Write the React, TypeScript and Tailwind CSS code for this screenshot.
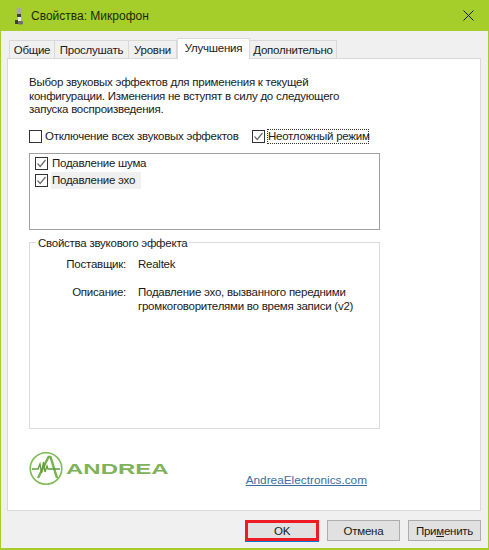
import { ReactNode } from 'react'

const tabs = [
  { label: 'Общие', width: 'w-[46px]' },
  { label: 'Прослушать', width: 'w-[74px]' },
  { label: 'Уровни', width: 'w-[48px]' },
]

function Checkbox({ checked }: { checked?: boolean }) {
  return (
    <span className="flex h-[13px] w-[13px] shrink-0 items-center justify-center border border-[#333333] bg-white">
      {checked && (
        <svg width="11" height="11" viewBox="0 0 11 11" fill="none">
          <path d="M1.5 5.5 L4.2 8.5 L9.5 2" stroke="#6b6b6b" strokeWidth="1.2" />
        </svg>
      )}
    </span>
  )
}

function Button({ children }: { children: ReactNode }) {
  return (
    <div className="flex h-[21px] w-[73px] items-center justify-center border border-[#adadad] bg-[#e1e1e1]">
      {children}
    </div>
  )
}

function MicIcon() {
  return (
    <svg width="12" height="18" viewBox="0 0 12 18">
      <rect x="3.5" y="0.5" width="5" height="7" rx="2.2" fill="#a8a8a8" />
      <rect x="4" y="7" width="4" height="3" fill="#3c3c3c" />
      <rect x="5" y="10" width="3" height="4" fill="#e8e8e8" />
      <rect x="2" y="13" width="3" height="4" fill="#3c3c3c" />
      <rect x="5" y="14" width="5" height="3.5" rx="1" fill="#6e6e6e" />
    </svg>
  )
}

function AndreaLogo() {
  return (
    <div className="flex items-center">
      <svg width="34" height="35" viewBox="0 0 34 35" fill="none">
        <circle cx="17" cy="17.5" r="15.8" stroke="#7fba55" strokeWidth="1.6" />
        <path d="M9 27 L19.5 6 L21.5 6 L28 27" stroke="#74b24a" strokeWidth="2.4" />
        <path d="M3 18 H9 L11 13 L12.5 22 L14.5 11 L16 21 L18 15 L19 18 H31" stroke="#5f9e3c" strokeWidth="1.3" />
      </svg>
      <span className="ml-[3px] inline-block origin-left scale-x-[1.6] font-['Liberation_Sans'] text-[15px] leading-none font-bold tracking-normal text-[#7fb35a]">
        ANDREA
      </span>
    </div>
  )
}

export default function App() {
  return (
    <div className="flex h-[550px] w-[489px] flex-col whitespace-nowrap border-x border-b-2 border-[#a6ce2a] bg-[#f0f0f0] font-['Liberation_Sans','Noto_Sans',sans-serif] text-[11.5px] leading-[14px] tracking-[-0.25px] text-[#1a1a1a]">
      {/* Title bar */}
      <div className="flex h-[31px] shrink-0 items-center bg-[#a6ce2a] pl-[12px] pr-[14px]">
        <MicIcon />
        <span className="ml-[6px] text-[12px] tracking-normal text-[#1c2a00]">Свойства: Микрофон</span>
        <svg className="ml-auto" width="11" height="11" viewBox="0 0 11 11" fill="none">
          <path d="M0.5 0.5 L10.5 10.5 M10.5 0.5 L0.5 10.5" stroke="#1a1a1a" strokeWidth="1" />
        </svg>
      </div>

      {/* Tabs */}
      <div className="mt-[7px] flex h-[20px] shrink-0 items-end pl-[8px]">
        {tabs.map((tab) => (
          <div
            key={tab.label}
            className={`${tab.width} flex h-[18px] items-center justify-center border-t border-r border-[#d9d9d9] first:border-l`}
          >
            {tab.label}
          </div>
        ))}
        <div className="relative z-10 -mb-px flex h-[21px] w-[73px] items-center justify-center border-x border-t border-[#d9d9d9] bg-white pb-[3px]">
          Улучшения
        </div>
        <div className="flex h-[18px] w-[87px] items-center justify-center border-t border-r border-[#d9d9d9]">
          Дополнительно
        </div>
      </div>

      {/* Panel */}
      <div className="ml-[6px] flex h-[453px] w-[474px] shrink-0 flex-col border border-[#d9d9d9] bg-white pl-[21px]">
        <p className="mt-[17px] leading-[13.5px]">
          Выбор звуковых эффектов для применения к текущей
          <br />
          конфигурации. Изменения не вступят в силу до следующего
          <br />
          запуска воспроизведения.
        </p>

        <div className="mt-[12px] flex h-[15px] items-center">
          <Checkbox />
          <span className="ml-[3px] w-[207px]">Отключение всех звуковых эффектов</span>
          <Checkbox checked />
          <span className="ml-[2px] flex h-[15px] w-[102px] items-center border border-dotted border-[#333333]">
            Неотложный режим
          </span>
        </div>

        <div className="mt-[9px] flex h-[77px] w-[351px] flex-col border border-[#a0a0a0] pl-[5px] pt-[1px]">
          <div className="flex h-[17px] items-center">
            <Checkbox checked />
            <span className="ml-[4px]">Подавление шума</span>
          </div>
          <div className="flex h-[17px] items-center">
            <Checkbox checked />
            <span className="ml-[3px] flex h-[17px] w-[90px] items-center bg-[#f0f0f0] pl-px">Подавление эхо</span>
          </div>
        </div>

        {/* Group box */}
        <div className="relative mt-[12px] h-[187px] w-[351px] border border-[#dcdcdc] pt-[14px]">
          <span className="absolute -top-[7px] left-[6px] bg-white px-[2px]">Свойства звукового эффекта</span>
          <div className="grid grid-cols-[96px_1fr] gap-x-[12px] gap-y-[14px]">
            <span className="text-right">Поставщик:</span>
            <span>Realtek</span>
            <span className="text-right">Описание:</span>
            <span>
              Подавление эхо, вызванного передними
              <br />
              громкоговорителями во время записи (v2)
            </span>
          </div>
        </div>

        {/* Logo and link */}
        <div className="mt-[22px] flex w-[338px] items-start justify-between">
          <AndreaLogo />
          <a className="mt-[22px] text-[11.8px] tracking-normal text-[#3a6ea5] underline">AndreaElectronics.com</a>
        </div>
      </div>

      {/* Buttons */}
      <div className="mt-[9px] flex justify-end gap-[8px] pr-[7px]">
        <div className="flex h-[21px] w-[74px] items-center justify-center border-[3px] border-[#ed1c24] bg-[#e1e1e1] shadow-[0_1px_0_#0078d7]">OK</div>
        <Button>Отмена</Button>
        <Button>
          <span>
            При<span className="underline">м</span>енить
          </span>
        </Button>
      </div>
    </div>
  )
}
